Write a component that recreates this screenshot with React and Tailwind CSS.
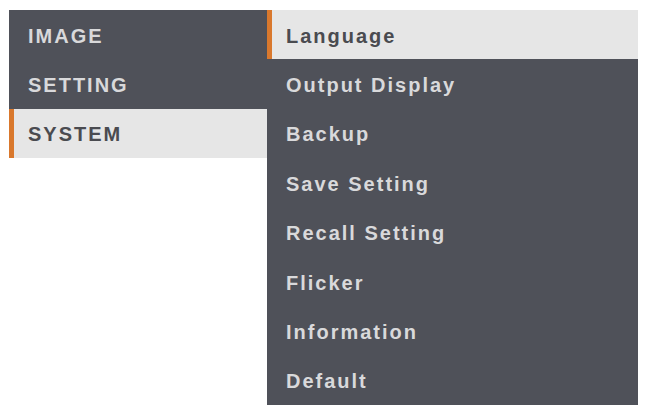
import React from 'react';

const mainItems = ['IMAGE', 'SETTING', 'SYSTEM'];
const subItems = [
  'Language',
  'Output Display',
  'Backup',
  'Save Setting',
  'Recall Setting',
  'Flicker',
  'Information',
  'Default',
];

function MenuRow({ label, active }) {
  return (
    <div
      className={`relative flex h-[49.4px] items-center pl-[19px] ${
        active ? 'bg-[#e6e6e6] text-[#4a4b50]' : 'text-[#d9d9db]'
      }`}
    >
      {active && <div className="absolute left-0 top-0 h-full w-[5px] bg-[#d9782d]"></div>}
      <span className="pt-[2px] text-[20px] font-bold leading-none tracking-[2px]">{label}</span>
    </div>
  );
}

export default function App() {
  return (
    <div
      className="flex h-[407px] w-[645px] items-start bg-white pl-[9px] pt-[10px]"
      style={{ fontFamily: '"Liberation Sans", Arial, sans-serif' }}
    >
      {/* Main menu */}
      <div className="w-[258px] bg-[#4f5159]">
        {mainItems.map((item) => (
          <MenuRow key={item} label={item} active={item === 'SYSTEM'} />
        ))}
      </div>

      {/* System submenu */}
      <div className="w-[371px] bg-[#4f5159]">
        {subItems.map((item) => (
          <MenuRow key={item} label={item} active={item === 'Language'} />
        ))}
      </div>
    </div>
  );
}
